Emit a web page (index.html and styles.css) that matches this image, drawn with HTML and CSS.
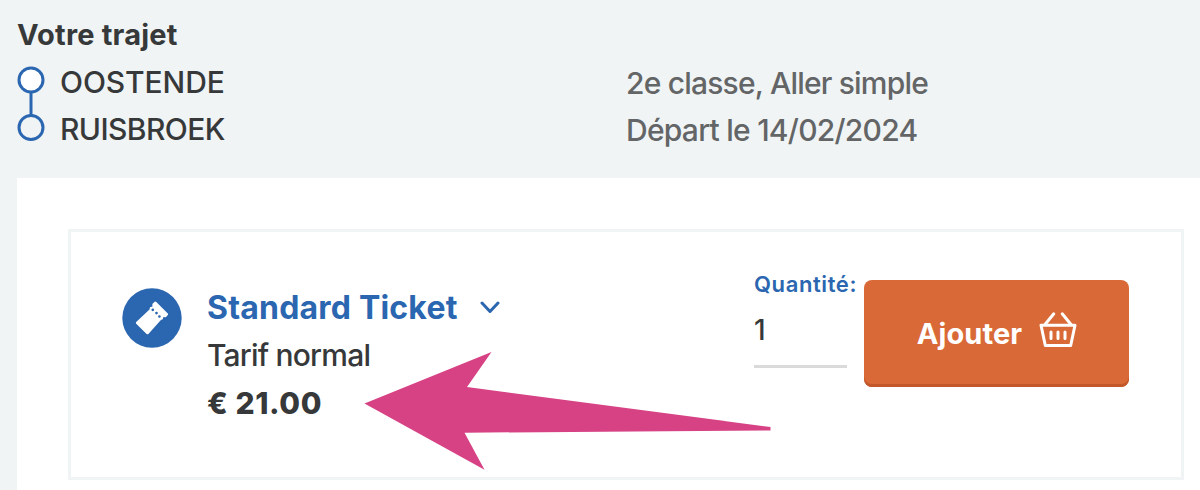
FILE: index.html
```
<!DOCTYPE html>
<html lang="fr">
<head>
  <meta charset="UTF-8"/>
  <meta name="viewport" content="width=device-width, initial-scale=1.0"/>
  <title>Votre trajet</title>
  <link rel="stylesheet" href="styles.css">
</head>
<body>

  <!-- Journey summary -->
  <header class="journey">
    <h2 class="journey-title">Votre trajet</h2>
    <div class="journey-row">
      <div class="route">
        <svg class="route-line" width="28" height="76" viewBox="0 0 28 76" fill="none" stroke="#2b66b0" stroke-width="3">
          <path d="M14 26v24"/>
          <circle cx="14" cy="14" r="12" fill="#fff"/>
          <circle cx="14" cy="61.5" r="12"/>
        </svg>
        <div class="stations">
          <div class="station-from">OOSTENDE</div>
          <div class="station-to">RUISBROEK</div>
        </div>
      </div>
      <div class="travel-info">
        <div class="travel-class">2e classe, Aller simple</div>
        <div class="travel-date">Départ le 14/02/2024</div>
      </div>
    </div>
  </header>

  <!-- Tickets -->
  <main class="panel">
    <div class="ticket-card">
      <svg class="ticket-icon" width="60" height="60" viewBox="0 0 60 60">
        <circle cx="30" cy="30" r="29.7" fill="#2b66b0"/>
        <path fill="#fff" d="M14.2 34 27.5 21.4 28 19.2 30.5 18.5 30.3 15.9 32.7 13.8Q33.5 13.2 34.3 14L45.8 25.4Q46.6 26.3 45.8 27.1L43.8 29.2 41.4 28.9 40.7 31.3 38.9 32 26.4 45.9Q25.5 46.8 24.6 45.9L14.2 35.7Q13.4 34.8 14.2 34Z"/>
        <path stroke="#2b66b0" stroke-width="2.7" stroke-linecap="round" d="M30.8 21.8h.01M34.5 25.1h.01M37.4 28.5h.01"/>
      </svg>
      <div class="ticket-info">
        <h3 class="ticket-name">
          <span>Standard Ticket</span>
          <svg width="20" height="13" viewBox="0 0 20 13" fill="none" stroke="#2b66b0" stroke-width="3" stroke-linecap="round" stroke-linejoin="round"><path d="M2 2l8 8.5L18 2"/></svg>
        </h3>
        <div class="ticket-fare">Tarif normal</div>
        <div class="ticket-price">€ 21.00</div>
      </div>
      <div class="quantity">
        <label class="quantity-label" for="qty">Quantité:</label>
        <input class="quantity-input" id="qty" type="text" value="1"/>
      </div>
      <button class="add-button" type="button">
        <span>Ajouter</span>
        <svg width="38" height="38" viewBox="0 0 38 38" fill="none" stroke="#fff" stroke-width="3" stroke-linecap="round" stroke-linejoin="round">
          <path d="M2 14.2h34L31.7 34.5H6.3Z"/>
          <path d="M6 13.5 14.8 2.8M32 13.5 23.2 2.8M12 21v6.5M19 21v6.5M26 21v6.5"/>
        </svg>
      </button>
    </div>
  </main>

  <!-- Arrow pointing at the price -->
  <svg class="price-arrow" width="408" height="120" viewBox="0 0 408 120">
    <path fill="#d64284" d="M0.5 53.5 127.5 2 103 37 406.5 77V80.5L100.5 82.7 120.5 119.7Z"/>
  </svg>

</body>
</html>
```
FILE: styles.css
```
* {
  box-sizing: border-box;
}
body {
  margin: 0;
  height: 490px;
  overflow: hidden;
  display: flex;
  flex-direction: column;
  position: relative;
  background: #f0f4f5;
  color: #363839;
  font-family: Inter, "Liberation Sans", sans-serif;
  font-size: 30px;
  font-weight: 450;
  line-height: 47.5px;
}
h2, h3 {
  margin: 0;
  font-size: inherit;
}
/* Journey summary */
.journey {
  height: 178px;
  padding: 11px 17px 0;
}
.journey-title {
  font-size: 29px;
  letter-spacing: 0.2px;
}
.journey-row {
  display: grid;
  grid-template-columns: 609px 1fr;
}
.route {
  display: flex;
  gap: 15px;
}
.route-line {
  margin-top: 7.5px;
}
.station-from {
  letter-spacing: -0.1px;
}
.station-to {
  letter-spacing: -0.6px;
}
.travel-info {
  padding-top: 1px;
  color: #636566;
}
.travel-class {
  letter-spacing: -0.8px;
}
.travel-date {
  letter-spacing: -0.75px;
}
/* Tickets */
.panel {
  flex: 1;
  margin-left: 17px;
  padding: 51px 16px 0 51px;
  background: #fff;
}
.ticket-card {
  display: flex;
  height: 251px;
  padding: 48px 52px 0 51px;
  border: 3px solid #f0f4f5;
}
.ticket-icon {
  margin-top: 8px;
}
.ticket-info {
  width: 547px;
  margin-left: 25px;
  padding-top: 3px;
}
.ticket-name {
  display: flex;
  align-items: center;
  gap: 22px;
  height: 49px;
  font-size: 32px;
  letter-spacing: 0.2px;
  color: #2b66b0;
}
.ticket-fare {
  letter-spacing: -0.8px;
}
.ticket-price {
  letter-spacing: 0.6px;
  font-weight: 800;
}
.quantity {
  display: flex;
  flex-direction: column;
  align-items: flex-start;
  width: 110px;
  margin-top: -10px;
}
.quantity-label {
  height: 28px;
  font-size: 22px;
  font-weight: 600;
  letter-spacing: 0.6px;
  line-height: 28px;
  white-space: nowrap;
  color: #2b66b0;
}
.quantity-input {
  width: 93px;
  height: 70px;
  padding: 0 0 3px;
  border: 0;
  border-bottom: 3px solid #dadada;
  background: none;
  color: inherit;
  font: inherit;
  font-size: 28px;
}
.add-button {
  display: flex;
  align-items: center;
  justify-content: center;
  gap: 17px;
  width: 265px;
  height: 107px;
  padding: 0 0 0 1px;
  border: 0;
  border-radius: 8px;
  background: #d96a37;
  box-shadow: inset 0 -3px #c2572a;
  color: #fff;
  font: inherit;
  font-size: 29px;
  font-weight: 700;
  letter-spacing: 0.1px;
}
.add-button svg {
  margin-bottom: 8px;
}
/* Lies over the card */
.price-arrow {
  position: absolute;
  left: 364px;
  top: 350px;
}
```
